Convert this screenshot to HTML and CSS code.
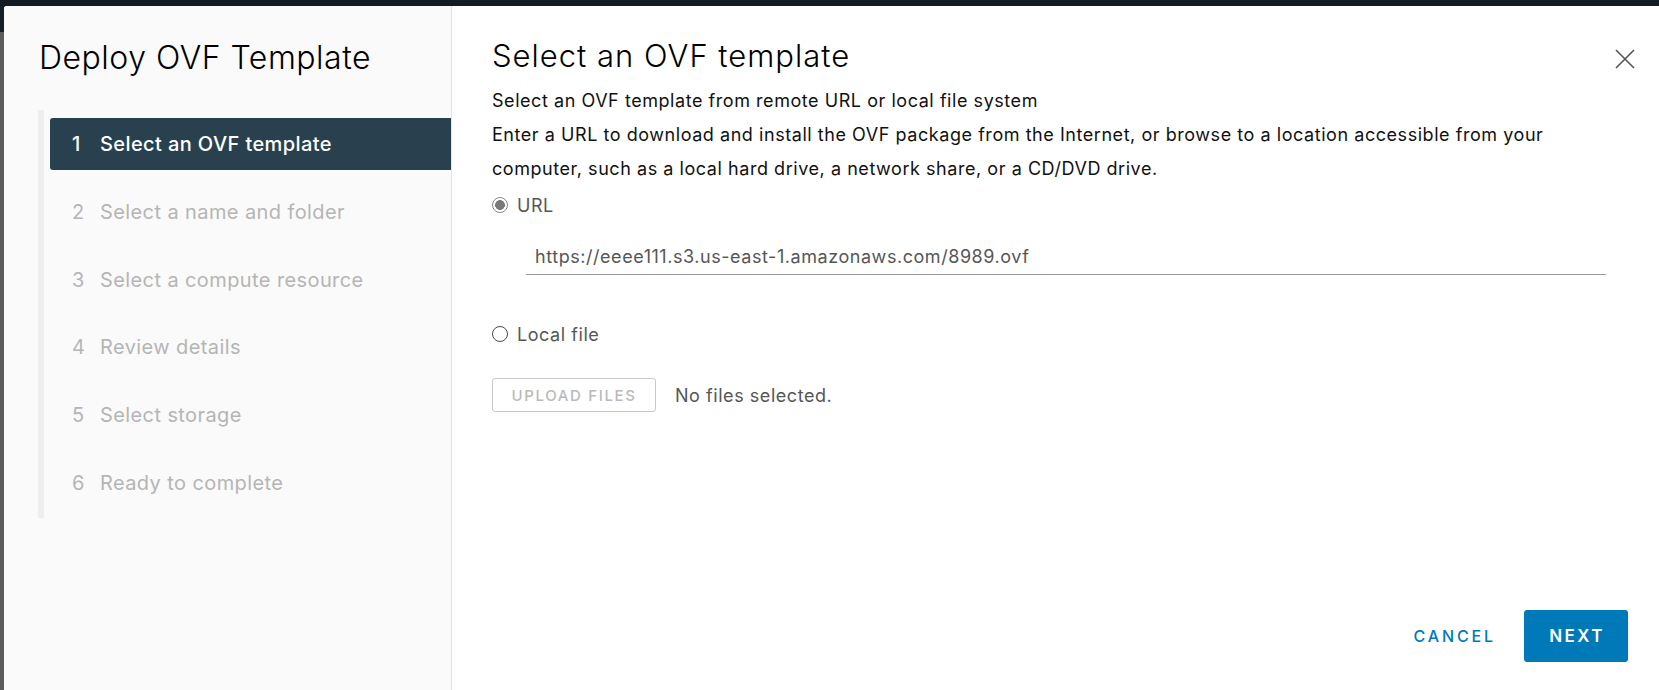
FILE: index.html
```html
<!DOCTYPE html>
<html lang="en">
<head>
<meta charset="utf-8">
<title>Deploy OVF Template</title>
<link rel="stylesheet" href="styles.css">
</head>
<body>
<div class="topbar"></div>
<div class="stage">
  <div class="modal">
    <aside class="nav">
      <h1 class="nav-title">Deploy OVF Template</h1>
      <ol class="steps">
        <li class="step active"><span class="num">1</span><span class="label">Select an OVF template</span></li>
        <li class="step"><span class="num">2</span><span class="label">Select a name and folder</span></li>
        <li class="step"><span class="num">3</span><span class="label">Select a compute resource</span></li>
        <li class="step"><span class="num">4</span><span class="label">Review details</span></li>
        <li class="step"><span class="num">5</span><span class="label">Select storage</span></li>
        <li class="step"><span class="num">6</span><span class="label">Ready to complete</span></li>
      </ol>
    </aside>
    <section class="content">
      <header class="head">
        <h2 class="title">Select an OVF template</h2>
        <button class="close" aria-label="Close">
          <svg width="20" height="20" viewBox="0 0 20 20"><path d="M1 1 L19 19 M19 1 L1 19" stroke="#555" stroke-width="1.6" fill="none"/></svg>
        </button>
      </header>
      <div class="body">
        <p class="line">Select an OVF template from remote URL or local file system</p>
        <p class="line">Enter a URL to download and install the OVF package from the Internet, or browse to a location accessible from your<br>computer, such as a local hard drive, a network share, or a CD/DVD drive.</p>
        <label class="radio-row"><span class="radio checked"></span><span class="radio-label">URL</span></label>
        <div class="url-input">https://eeee111.s3.us-east-1.amazonaws.com/8989.ovf</div>
        <label class="radio-row local"><span class="radio"></span><span class="radio-label">Local file</span></label>
        <div class="upload-row">
          <button class="upload">UPLOAD FILES</button>
          <span class="nofiles">No files selected.</span>
        </div>
      </div>
      <footer class="foot">
        <button class="btn-cancel">CANCEL</button>
        <button class="btn-next">NEXT</button>
      </footer>
    </section>
  </div>
</div>
</body>
</html>
```
FILE: styles.css
```css
* { box-sizing: border-box; }
html, body { margin: 0; padding: 0; }
body {
  width: 1659px;
  height: 690px;
  overflow: hidden;
  font-family: "Inter", "Open Sans", sans-serif;
  background: linear-gradient(to bottom, #151d25 0, #151d25 32px, #5c5c5c 32px, #5c5c5c 100%);
}
.topbar {
  height: 6px;
  background: #141b23;
}
.stage {
  display: flex;
  padding-left: 4px;
  height: 684px;
}
.modal {
  flex: 1;
  display: flex;
  background: #fff;
  border-top-left-radius: 3px;
  overflow: hidden;
}
.nav {
  width: 448px;
  flex: none;
  background: #fafafa;
  border-right: 1px solid #e3e3e3;
  padding: 32px 0 0 34px;
}
.nav-title {
  margin: 0 0 0 1px;
  font-size: 32px;
  line-height: 40px;
  font-weight: 300;
  letter-spacing: 0.5px;
  color: #000;
}
.steps {
  list-style: none;
  margin: 32px 0 0 0;
  padding: 8px 0 9px 6px;
  border-left: 6px solid #eeeeee;
  display: flex;
  flex-direction: column;
  gap: 15.8px;
}
.step {
  height: 52px;
  display: flex;
  align-items: center;
  padding-left: 22px;
  border-radius: 3px 0 0 3px;
  font-size: 20px;
  letter-spacing: 0.4px;
  color: #b5b5b5;
}
.step .num { width: 28px; }
.step.active {
  background: #29414e;
  color: #fff;
  font-weight: 500;
}
.content {
  flex: 1;
  display: flex;
  flex-direction: column;
  padding: 32px 31px 28px 40px;
}
.head {
  display: flex;
  justify-content: space-between;
  align-items: flex-start;
}
.title {
  margin: 0;
  font-size: 31px;
  line-height: 36px;
  font-weight: 300;
  letter-spacing: 1px;
  color: #000;
}
.close {
  border: 0;
  background: none;
  padding: 0;
  margin: 11px -7px 0 0;
  width: 20px;
  height: 20px;
  display: flex;
}
.body {
  margin-top: 10px;
  font-size: 18px;
  letter-spacing: 0.55px;
  color: #111;
}
.line {
  margin: 0;
  line-height: 34px;
  white-space: nowrap;
}
.radio-row {
  display: flex;
  align-items: center;
  height: 34px;
  margin-top: 2px;
  color: #565656;
}
.radio {
  width: 16px;
  height: 16px;
  border-radius: 50%;
  border: 1px solid #4a4a4a;
  background: #fff;
  margin-right: 9px;
  flex: none;
}
.radio.checked {
  border: 1.5px solid #8a8a8a;
  background: radial-gradient(circle, #7a7a7a 0, #7a7a7a 4.6px, #fff 5.2px);
}
.url-input {
  margin: 17px 22px 0 34px;
  height: 36px;
  line-height: 35px;
  padding-left: 9px;
  border-bottom: 1px solid #9a9a9a;
  color: #565656;
}
.radio-row.local {
  margin-top: 42px;
}
.upload-row {
  display: flex;
  align-items: center;
  margin-top: 27px;
}
.upload {
  width: 164px;
  height: 34px;
  border: 1px solid #c9c9c9;
  border-radius: 3px;
  background: #fff;
  color: #bababa;
  font-family: inherit;
  font-size: 15px;
  font-weight: 500;
  letter-spacing: 0.11em;
  padding: 0;
}
.nofiles {
  margin-left: 19px;
  color: #565656;
}
.foot {
  margin-top: auto;
  display: flex;
  justify-content: flex-end;
  align-items: center;
}
.btn-cancel {
  border: 0;
  background: none;
  font-family: inherit;
  color: #0079b8;
  font-size: 16px;
  font-weight: 500;
  letter-spacing: 0.18em;
  padding: 0 12px;
  margin-right: 16px;
  height: 52px;
}
.btn-next {
  width: 104px;
  height: 52px;
  border: 0;
  border-radius: 3px;
  background: #0079b8;
  color: #fff;
  font-family: inherit;
  font-size: 17px;
  font-weight: 600;
  letter-spacing: 0.14em;
  padding: 0 0 0 2px;
}
```
